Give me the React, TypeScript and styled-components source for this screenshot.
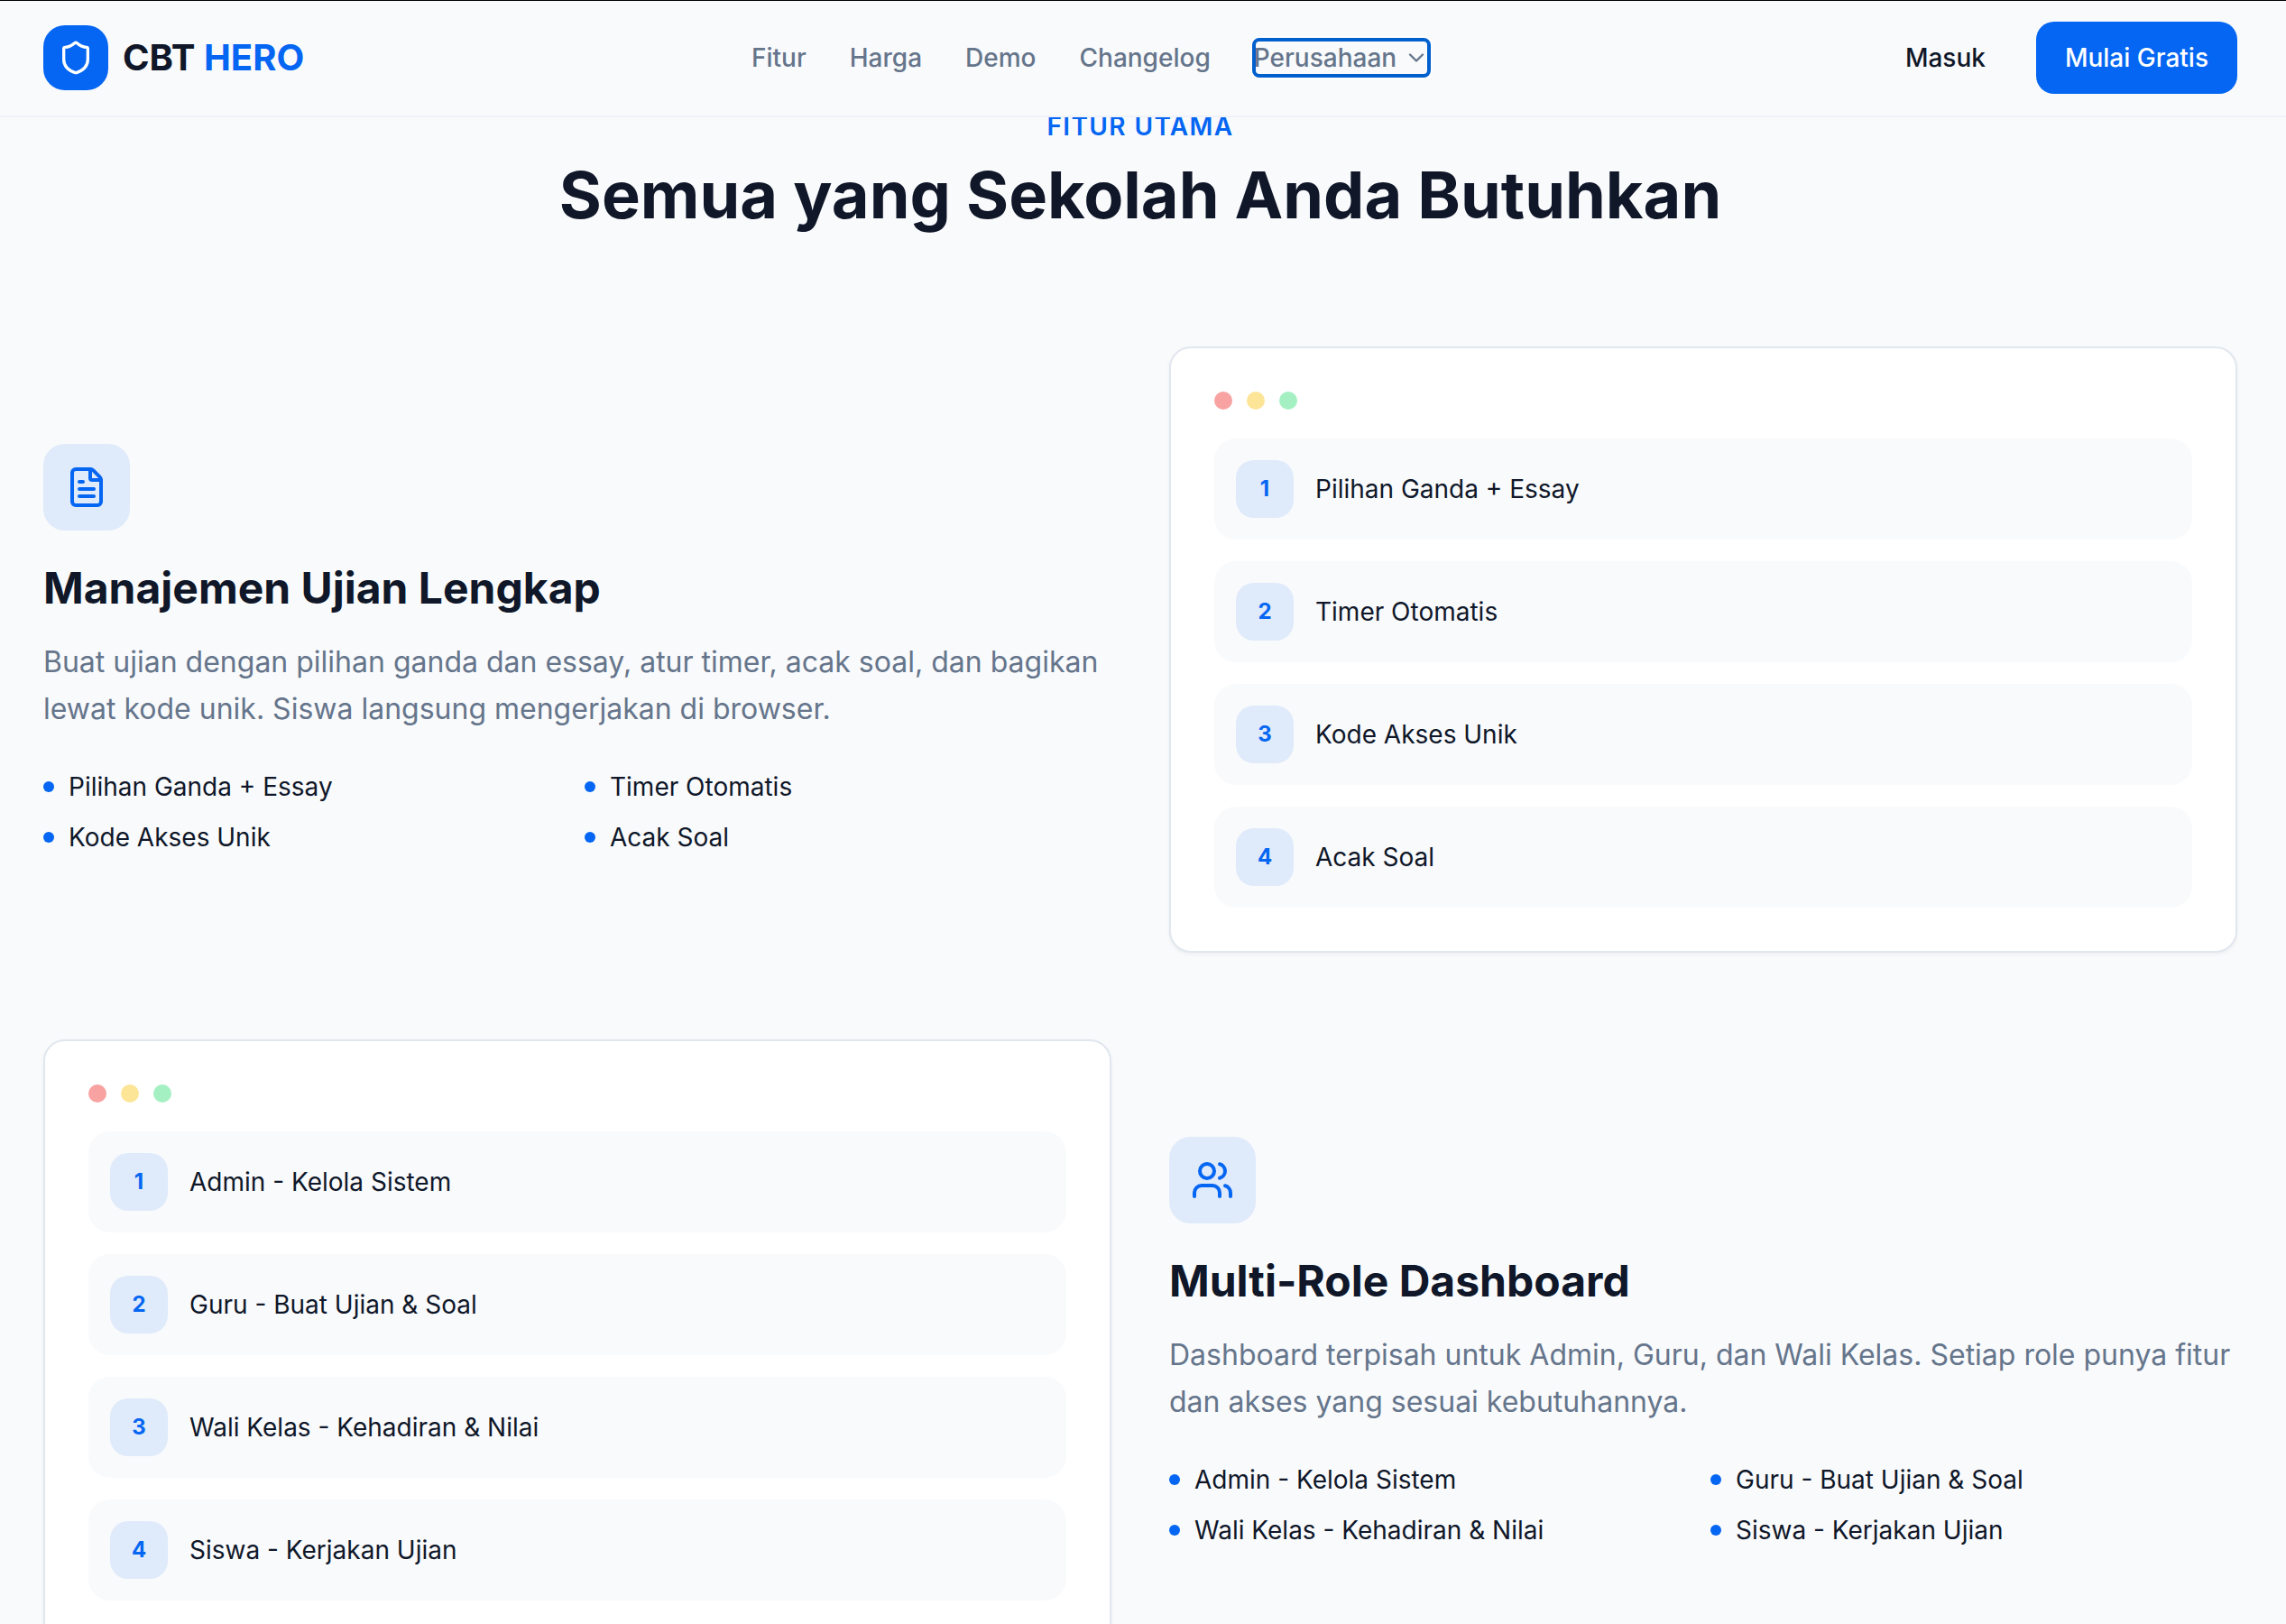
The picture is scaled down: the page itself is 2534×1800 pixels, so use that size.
import React from "react";
import styled, { createGlobalStyle } from "styled-components";
import { ChevronDown, FileText, Shield, Users, type LucideIcon } from "lucide-react";

const color = {
  page: "#f9fafc",
  card: "#ffffff",
  ink: "#0f1729",
  muted: "#65758b",
  primary: "#0466f2",
  tint: "#dfeafa",
  line: "#e1e7ef",
  hairline: "#eff2f9",
  ring: "#0060cd",
};

const GlobalStyle = createGlobalStyle`
  *, *::before, *::after { box-sizing: border-box; }
  body {
    margin: 0;
    background: ${color.page};
    color: ${color.ink};
    font-family: Inter, "Liberation Sans", sans-serif;
    font-size: 28px;
    line-height: 40px;
    -webkit-font-smoothing: antialiased;
  }
  h1, h2, h3, p, ul, ol { margin: 0; padding: 0; }
  ul, ol { list-style: none; }
  a { color: inherit; text-decoration: none; }
  button { font: inherit; cursor: pointer; }
`;

const Header = styled.header`
  position: fixed;
  inset: 0 0 auto 0;
  z-index: 10;
  background: ${color.page};
  border-bottom: 2px solid ${color.hairline};
  box-shadow: inset 0 1px 0 #000000;
`;

const HeaderInner = styled.div`
  display: flex;
  align-items: center;
  justify-content: space-between;
  height: 128px;
  padding: 0 54px 0 48px;
`;

const Brand = styled.a`
  display: flex;
  align-items: center;
  gap: 16px;
  font-size: 40px;
  line-height: 56px;
  font-weight: 700;
`;

const BrandMark = styled.span`
  display: grid;
  place-items: center;
  width: 72px;
  height: 72px;
  border-radius: 24px;
  background: ${color.primary};
  color: #ffffff;
`;

const BrandAccent = styled.span`
  color: ${color.primary};
`;

const Nav = styled.nav`
  display: flex;
  align-items: center;
  gap: 48px;
  color: ${color.muted};
  font-weight: 500;
`;

const NavMenuButton = styled.button`
  display: flex;
  align-items: center;
  gap: 8px;
  padding: 0;
  border: 0;
  border-radius: 6px;
  background: none;
  color: inherit;
  outline: 4px solid ${color.ring};
  outline-offset: -2px;
  box-shadow: 0 0 0 4px #ffffff;
`;

const Actions = styled.div`
  display: flex;
  align-items: center;
  gap: 24px;
`;

const ActionButton = styled.button<{ $filled?: boolean }>`
  height: 80px;
  padding: 0 32px;
  border: 0;
  border-radius: 20px;
  font-weight: 500;
  background: ${(p) => (p.$filled ? color.primary : "transparent")};
  color: ${(p) => (p.$filled ? "#ffffff" : color.ink)};
`;

const Main = styled.main`
  padding: 120px 54px 96px 48px;
`;

const SectionHead = styled.div`
  display: flex;
  flex-direction: column;
  gap: 16px;
  margin-bottom: 128px;
  text-align: center;
`;

const Eyebrow = styled.p`
  color: ${color.primary};
  font-weight: 600;
  letter-spacing: 0.05em;
  text-transform: uppercase;
`;

const Title = styled.h2`
  font-size: 72px;
  line-height: 80px;
  font-weight: 700;
`;

const FeatureList = styled.div`
  display: grid;
  gap: 96px;
`;

const FeatureRow = styled.article`
  display: grid;
  grid-template-columns: repeat(2, minmax(0, 1fr));
  align-items: center;
  gap: 64px;
`;

const FeatureText = styled.div<{ $last?: boolean }>`
  order: ${(p) => (p.$last ? 2 : 0)};
`;

const FeatureIcon = styled.div`
  display: grid;
  place-items: center;
  width: 96px;
  height: 96px;
  margin-bottom: 32px;
  border-radius: 24px;
  background: ${color.tint};
  color: ${color.primary};
`;

const FeatureTitle = styled.h3`
  margin-bottom: 24px;
  font-size: 48px;
  line-height: 64px;
  font-weight: 700;
`;

const FeatureCopy = styled.p`
  margin-bottom: 40px;
  color: ${color.muted};
  font-size: 32px;
  line-height: 52px;
`;

const Points = styled.ul`
  display: grid;
  grid-template-columns: repeat(2, minmax(0, 1fr));
  gap: 16px;
`;

const Point = styled.li`
  display: flex;
  align-items: center;
  gap: 16px;

  &::before {
    content: "";
    flex: none;
    width: 12px;
    height: 12px;
    border-radius: 50%;
    background: ${color.primary};
  }
`;

const PreviewCard = styled.div`
  padding: 48px;
  border: 2px solid ${color.line};
  border-radius: 24px;
  background: ${color.card};
  box-shadow: 0 2px 4px rgba(0, 0, 0, 0.05);
`;

const WindowDots = styled.div`
  display: flex;
  gap: 16px;
  margin-bottom: 32px;
`;

const WindowDot = styled.span<{ $color: string }>`
  width: 20px;
  height: 20px;
  border-radius: 50%;
  background: ${(p) => p.$color};
`;

const PreviewList = styled.ol`
  display: grid;
  gap: 24px;
`;

const PreviewItem = styled.li`
  display: flex;
  align-items: center;
  gap: 24px;
  padding: 24px;
  border-radius: 24px;
  background: ${color.page};
`;

const StepNumber = styled.span`
  display: grid;
  place-items: center;
  width: 64px;
  height: 64px;
  border-radius: 20px;
  background: ${color.tint};
  color: ${color.primary};
  font-size: 24px;
  line-height: 32px;
  font-weight: 700;
`;

const navLinks = ["Fitur", "Harga", "Demo", "Changelog"];
const dotColors = ["#f8a2a2", "#fde597", "#a4f0c3"];

type Feature = {
  icon: LucideIcon;
  title: string;
  copy: string;
  points: string[];
};

const features: Feature[] = [
  {
    icon: FileText,
    title: "Manajemen Ujian Lengkap",
    copy: "Buat ujian dengan pilihan ganda dan essay, atur timer, acak soal, dan bagikan lewat kode unik. Siswa langsung mengerjakan di browser.",
    points: ["Pilihan Ganda + Essay", "Timer Otomatis", "Kode Akses Unik", "Acak Soal"],
  },
  {
    icon: Users,
    title: "Multi-Role Dashboard",
    copy: "Dashboard terpisah untuk Admin, Guru, dan Wali Kelas. Setiap role punya fitur dan akses yang sesuai kebutuhannya.",
    points: [
      "Admin - Kelola Sistem",
      "Guru - Buat Ujian & Soal",
      "Wali Kelas - Kehadiran & Nilai",
      "Siswa - Kerjakan Ujian",
    ],
  },
];

function FeatureSection({ feature, reversed }: { feature: Feature; reversed: boolean }) {
  const Icon = feature.icon;
  return (
    <FeatureRow>
      <FeatureText $last={reversed}>
        <FeatureIcon>
          <Icon size={48} strokeWidth={2} />
        </FeatureIcon>
        <FeatureTitle>{feature.title}</FeatureTitle>
        <FeatureCopy>{feature.copy}</FeatureCopy>
        <Points>
          {feature.points.map((point) => (
            <Point key={point}>{point}</Point>
          ))}
        </Points>
      </FeatureText>
      <PreviewCard>
        <WindowDots>
          {dotColors.map((dot) => (
            <WindowDot key={dot} $color={dot} />
          ))}
        </WindowDots>
        <PreviewList>
          {feature.points.map((point, index) => (
            <PreviewItem key={point}>
              <StepNumber>{index + 1}</StepNumber>
              <span>{point}</span>
            </PreviewItem>
          ))}
        </PreviewList>
      </PreviewCard>
    </FeatureRow>
  );
}

export default function App() {
  return (
    <>
      <GlobalStyle />
      <Header>
        <HeaderInner>
          <Brand href="#">
            <BrandMark>
              <Shield size={40} strokeWidth={2} />
            </BrandMark>
            <span>
              CBT <BrandAccent>HERO</BrandAccent>
            </span>
          </Brand>
          <Nav>
            {navLinks.map((label) => (
              <a key={label} href={`#${label.toLowerCase()}`}>
                {label}
              </a>
            ))}
            <NavMenuButton type="button" aria-haspopup="menu">
              Perusahaan
              <ChevronDown size={28} strokeWidth={2} />
            </NavMenuButton>
          </Nav>
          <Actions>
            <ActionButton type="button">Masuk</ActionButton>
            <ActionButton type="button" $filled>
              Mulai Gratis
            </ActionButton>
          </Actions>
        </HeaderInner>
      </Header>
      <Main>
        <SectionHead>
          <Eyebrow>Fitur Utama</Eyebrow>
          <Title>Semua yang Sekolah Anda Butuhkan</Title>
        </SectionHead>
        <FeatureList>
          {features.map((feature, index) => (
            <FeatureSection key={feature.title} feature={feature} reversed={index % 2 === 1} />
          ))}
        </FeatureList>
      </Main>
    </>
  );
}
